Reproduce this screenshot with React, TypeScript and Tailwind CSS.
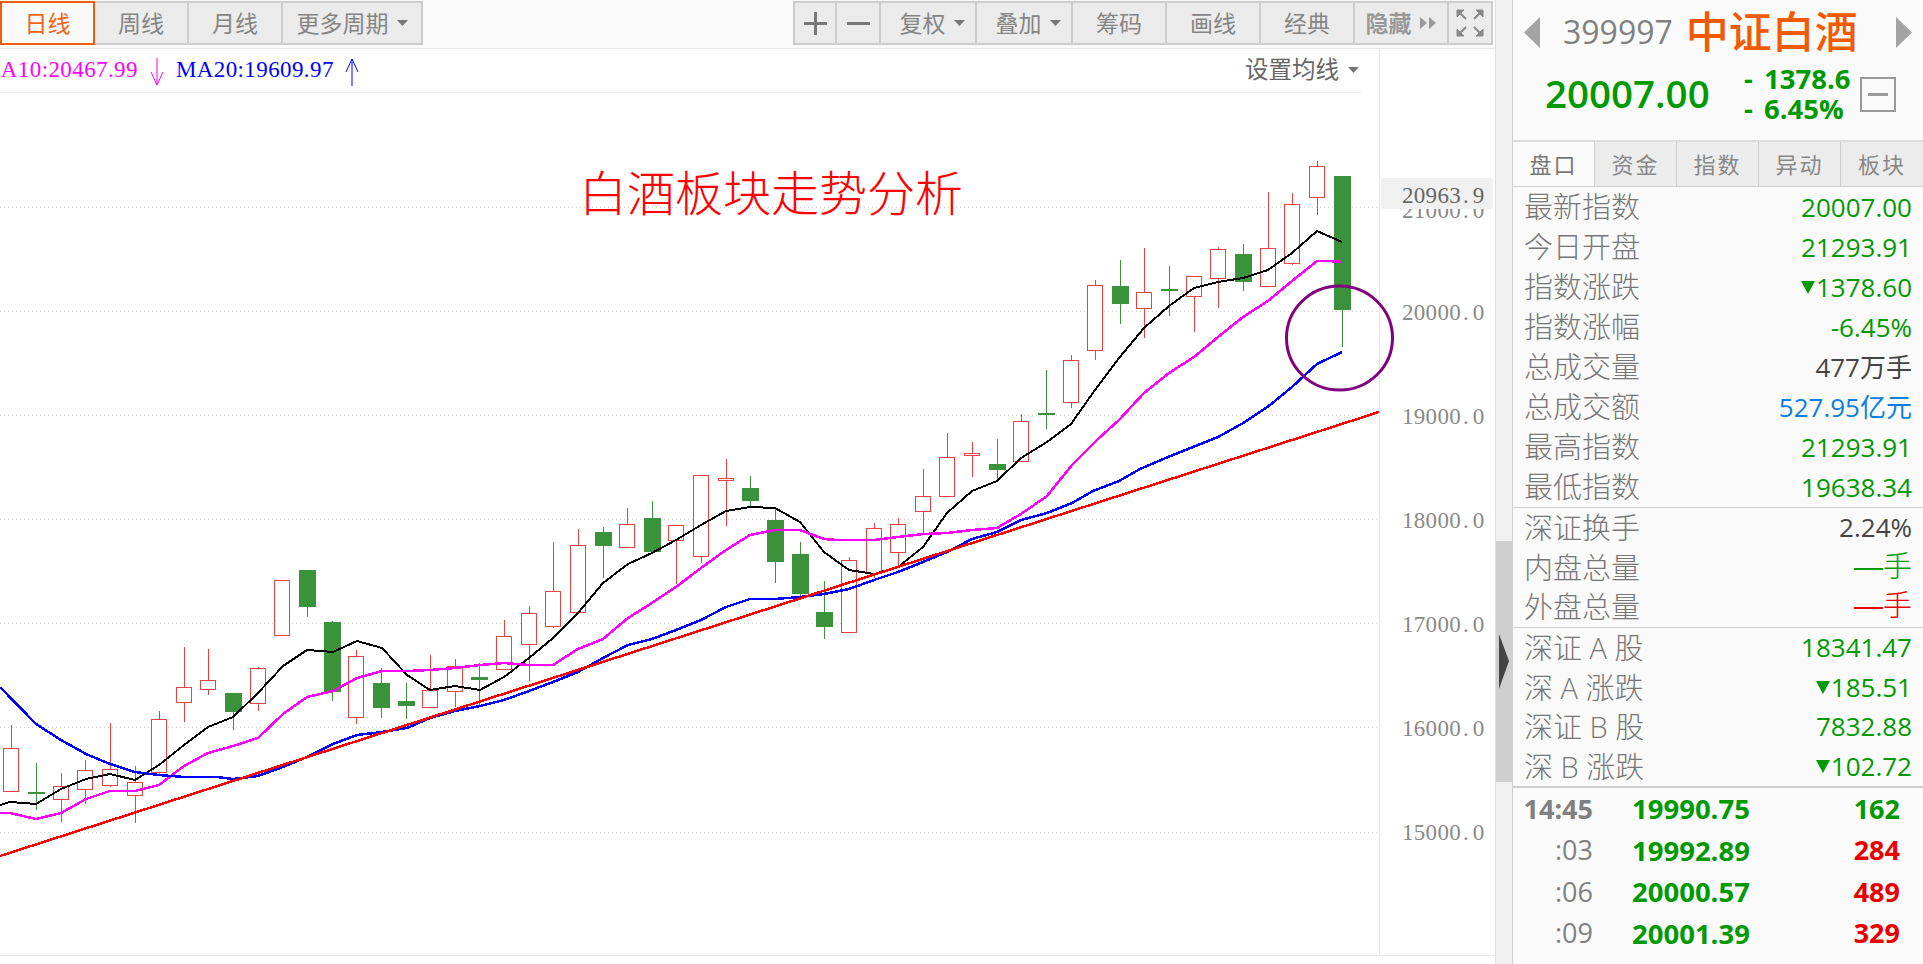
import React from 'react';

type Candle = [number, number, number, number, number, 'r' | 'g'];

// x, body top, body bottom, wick top, wick bottom
const CANDLES: Candle[] = [
  [11, 748, 791, 725, 748, 'r'],
  [36, 792, 794, 763, 810, 'g'],
  [61, 786, 799, 773, 822, 'r'],
  [85, 770, 789, 760, 804, 'r'],
  [110, 769, 785, 723, 787, 'r'],
  [135, 782, 795, 766, 823, 'r'],
  [159, 719, 772, 711, 774, 'r'],
  [184, 687, 702, 647, 722, 'r'],
  [208, 680, 689, 649, 695, 'r'],
  [233, 693, 712, 693, 730, 'g'],
  [258, 668, 703, 667, 711, 'r'],
  [282, 580, 635, 580, 635, 'r'],
  [307, 570, 607, 570, 617, 'g'],
  [332, 622, 692, 621, 701, 'g'],
  [356, 656, 717, 650, 724, 'r'],
  [381, 683, 708, 668, 718, 'g'],
  [406, 701, 706, 683, 719, 'g'],
  [430, 690, 707, 655, 707, 'r'],
  [455, 666, 691, 659, 707, 'r'],
  [479, 677, 680, 663, 707, 'g'],
  [504, 636, 669, 620, 669, 'r'],
  [529, 613, 644, 606, 681, 'r'],
  [553, 591, 626, 542, 628, 'r'],
  [578, 545, 612, 529, 612, 'r'],
  [603, 532, 546, 527, 578, 'g'],
  [627, 524, 547, 508, 547, 'r'],
  [652, 518, 552, 501, 552, 'g'],
  [676, 525, 540, 525, 584, 'r'],
  [701, 475, 556, 475, 563, 'r'],
  [726, 478, 480, 459, 526, 'r'],
  [750, 488, 501, 476, 507, 'g'],
  [775, 520, 562, 507, 583, 'g'],
  [800, 554, 594, 542, 597, 'g'],
  [824, 612, 627, 581, 639, 'g'],
  [849, 560, 632, 557, 632, 'r'],
  [874, 528, 573, 523, 578, 'r'],
  [898, 524, 552, 518, 568, 'r'],
  [923, 496, 511, 469, 535, 'r'],
  [947, 457, 496, 433, 496, 'r'],
  [972, 453, 455, 442, 477, 'r'],
  [997, 464, 470, 439, 480, 'g'],
  [1021, 421, 461, 414, 461, 'r'],
  [1046, 413, 415, 370, 429, 'g'],
  [1071, 360, 402, 355, 408, 'r'],
  [1095, 285, 350, 280, 360, 'r'],
  [1120, 286, 304, 260, 324, 'g'],
  [1144, 292, 308, 248, 338, 'r'],
  [1169, 289, 290, 266, 316, 'g'],
  [1194, 276, 296, 276, 332, 'r'],
  [1218, 249, 278, 247, 308, 'r'],
  [1243, 254, 282, 244, 291, 'g'],
  [1268, 248, 286, 192, 286, 'r'],
  [1292, 204, 263, 193, 265, 'r'],
  [1317, 166, 197, 161, 215, 'r'],
  [1342, 176, 310, 176, 347, 'g'],
];

const MA5 =
  '0,805 10,802 36,804 61,789 86,779 110,774 135,780 159,765 184,745 208,727 233,717 258,693 283,666 307,650 333,652 357,641 382,648 407,675 430,690 455,686 480,690 504,677 529,658 553,638 578,613 603,583 628,564 652,553 676,540 701,525 726,511 750,507 775,508 800,522 824,552 849,570 874,574 898,567 923,547 947,513 972,491 997,481 1021,458 1047,442 1071,424 1095,390 1119,358 1144,328 1169,306 1194,288 1218,282 1243,278 1268,270 1292,253 1317,231 1342,242';
const MA10 =
  '0,813 10,813 36,819 61,813 86,799 110,791 135,791 159,785 184,766 208,753 233,746 258,738 283,714 307,697 333,691 357,678 382,671 407,671 430,670 455,668 480,665 504,663 529,665 553,665 578,649 603,639 628,618 652,603 676,587 701,568 726,550 750,535 775,530 800,530 824,539 837,540 874,540 898,537 923,534 947,533 972,530 997,528 1021,514 1047,496 1072,465 1097,440 1119,420 1144,393 1169,373 1194,357 1218,337 1243,317 1268,301 1292,281 1317,261 1329,261 1342,262';
const MA20 =
  '0,687 36,724 61,740 86,754 110,764 135,772 159,775 184,777 217,777 233,779 258,776 283,767 307,757 333,744 357,735 382,732 407,728 430,718 455,711 480,706 504,700 529,691 553,682 578,672 603,658 628,645 652,639 676,630 701,620 726,607 750,599 775,599 800,597 824,594 849,589 874,580 898,572 923,562 947,552 972,539 997,532 1021,520 1047,513 1072,503 1093,491 1119,481 1140,469 1168,457 1218,437 1245,422 1270,405 1292,387 1317,364 1342,352';

const GRID = [207, 311, 415, 519, 623, 727, 832];
const AXIS: [string, number][] = [
  ['21000.0', 210],
  ['20000.0', 312],
  ['19000.0', 416],
  ['18000.0', 520],
  ['17000.0', 624],
  ['16000.0', 728],
  ['15000.0', 832],
];
// fixed pitch for the axis digits, the period takes a full cell too
const AXIS_X = '1402 1413.8 1425.6 1437.4 1449.2 1463 1472.8';

const GREEN = 'text-[#009900]';
const RED = 'text-[#e60000]';

const Caret = ({ className = '' }: { className?: string }) => (
  <svg width="11" height="6" viewBox="0 0 11 6" className={className}>
    <polygon points="0,0 11,0 5.5,6" fill="#777" />
  </svg>
);

const ToolBtn = ({ className = '', children }: { className?: string; children: React.ReactNode }) => (
  <button className={`h-[44px] -ml-[2px] flex items-center justify-center gap-[8px] border-2 border-[#cdcdcd] bg-[#ebebeb] text-[23px] text-[#858585] ${className}`}>
    {children}
  </button>
);

const DownMark = () => (
  <svg width="14" height="13" viewBox="0 0 14 13" className="mr-[1px]">
    <polygon points="0,0 14,0 7,13" fill="#009900" />
  </svg>
);

const Row = ({ label, className = '', children }: { label: string; className?: string; children: React.ReactNode }) => (
  <div className="flex-1 min-h-0 pl-[11px] pr-[11px] flex items-center justify-between">
    <span className="text-[29px] font-light text-[#777] whitespace-pre">{label}</span>
    <span className={`flex items-center text-[26px] ${className}`}>{children}</span>
  </div>
);

const TICKS: [string, string, string, string][] = [
  ['14:45', '19990.75', '162', GREEN],
  [':03', '19992.89', '284', RED],
  [':06', '20000.57', '489', RED],
  [':09', '20001.39', '329', RED],
  [':12', '20003.75', '112', RED],
];

function Chart() {
  return (
    <svg width="1379" height="862" viewBox="0 93 1379 862" className="relative z-10 block overflow-visible">
      {GRID.map((y) => (
        <line key={y} x1="0" x2="1379" y1={y + 0.5} y2={y + 0.5} stroke="#cfcfcf" strokeDasharray="1 3" />
      ))}
      <g shapeRendering="crispEdges">
        {CANDLES.map(([x, top, bottom, hi, lo, kind]) => {
          const color = kind === 'r' ? '#e84343' : '#3a923a';
          return (
            <g key={x}>
              <line x1={x + 0.5} x2={x + 0.5} y1={hi} y2={lo} stroke={color} />
              {kind === 'r' ? (
                <rect x={x - 7.5} y={top + 0.5} width="15" height={Math.max(bottom - top, 1)} fill="#fff" stroke={color} />
              ) : (
                <rect x={x - 8} y={top} width="17" height={Math.max(bottom - top, 2)} fill={color} />
              )}
            </g>
          );
        })}
        <polyline points={MA5} fill="none" stroke="#000" strokeWidth="2" />
        <polyline points={MA10} fill="none" stroke="#ff00ff" strokeWidth="2.5" />
        <polyline points={MA20} fill="none" stroke="#0000ff" strokeWidth="2.5" />
        <line x1="0" y1="856" x2="1379" y2="412" stroke="#ff0000" strokeWidth="2.5" />
      </g>
      <ellipse cx="1339.5" cy="338" rx="53" ry="52" fill="none" stroke="#800080" strokeWidth="3" />
    </svg>
  );
}

function Axis() {
  return (
    <svg width="115" height="862" viewBox="1380 93 115 862" className="block">
      <g fontFamily="'Liberation Serif', serif" fontSize="23" fill="#888">
        {AXIS.map(([label, y]) => (
          <text key={label} x={AXIS_X} y={y + 8}>
            {label}
          </text>
        ))}
      </g>
      <rect x="1381" y="178" width="112" height="31" rx="2" fill="#f0f0f0" />
      <text x={AXIS_X} y="203" fontFamily="'Liberation Serif', serif" fontSize="23" fill="#666">
        20963.9
      </text>
    </svg>
  );
}

export default function App() {
  return (
    <div className="w-[1923px] h-[964px] flex overflow-hidden bg-white font-['Open_Sans','Noto_Sans_CJK_SC',sans-serif]">
      <main className="w-[1496px] flex flex-col border-r border-[#dedede]">
        <div className="h-[49px] pt-[1px] pl-[2px] pr-[2px] flex bg-[#fafafa] border-b border-[#e6e6e6]">
          <ToolBtn className="w-[95px] relative z-10 !border-[#ee6010] !bg-[#fafafa] !text-[#f0651a]">日线</ToolBtn>
          <ToolBtn className="w-[96px]">周线</ToolBtn>
          <ToolBtn className="w-[96px]">月线</ToolBtn>
          <ToolBtn className="w-[142px]">
            更多周期
            <Caret />
          </ToolBtn>
          <div className="ml-auto flex">
            <ToolBtn className="w-[44px]">
              <svg width="23" height="23" viewBox="0 0 23 23">
                <path d="M0 11.5H23M11.5 0V23" stroke="#777" strokeWidth="3" />
              </svg>
            </ToolBtn>
            <ToolBtn className="w-[46px]">
              <svg width="23" height="3" viewBox="0 0 23 3">
                <path d="M0 1.5H23" stroke="#777" strokeWidth="3" />
              </svg>
            </ToolBtn>
            <ToolBtn className="w-[98px] pl-[8px]">
              复权
              <Caret />
            </ToolBtn>
            <ToolBtn className="w-[98px] pl-[8px]">
              叠加
              <Caret />
            </ToolBtn>
            <ToolBtn className="w-[96px]">筹码</ToolBtn>
            <ToolBtn className="w-[96px]">画线</ToolBtn>
            <ToolBtn className="w-[96px]">经典</ToolBtn>
            <ToolBtn className="w-[96px] !gap-[7px] font-bold !text-[#999]">
              隐藏
              <svg width="18" height="14" viewBox="0 0 18 14">
                <path d="M1 1L8 7L1 13ZM10 1L17 7L10 13Z" fill="#999" />
              </svg>
            </ToolBtn>
            <ToolBtn className="w-[46px]">
              <svg width="28" height="28" viewBox="0 0 28 28" fill="#888" stroke="#888">
                <path d="M1 1H8L1 8ZM27 1H20L27 8ZM1 27H8L1 20ZM27 27H20L27 20Z" />
                <path d="M3 3L10 10M25 3L18 10M3 25L10 18M25 25L18 18" strokeWidth="2" fill="none" />
              </svg>
            </ToolBtn>
          </div>
        </div>

        <div className="flex-1 flex min-h-0">
          <div className="relative w-[1380px] border-r border-[#e4e4e4]">
            <div className="w-[1361px] h-[44px] pr-[2px] flex items-center border-b border-[#eaeaea] font-['Liberation_Serif',serif] text-[23px] tracking-[0.4px] overflow-hidden">
              <span className="-ml-[20px] text-[#ff00ff]">MA10:20467.99</span>
              <svg width="14" height="28" viewBox="0 0 14 28" className="ml-[12px] mt-[3px]">
                <path d="M7 0V27M1 14L7 27L13 14" fill="none" stroke="#ff00ff" />
              </svg>
              <span className="ml-[12px] text-[#0000ff]">MA20:19609.97</span>
              <svg width="14" height="28" viewBox="0 0 14 28" className="ml-[11px] mt-[3px]">
                <path d="M7 28V1M1 14L7 1L13 14" fill="none" stroke="#0000ff" />
              </svg>
              <span className="ml-auto -mt-[4px] flex items-center gap-[9px] font-['Noto_Sans_CJK_SC',sans-serif] text-[23.5px] tracking-normal text-[#666]">
                设置均线
                <Caret className="mt-[2px]" />
              </span>
            </div>
            <Chart />
            <div className="absolute z-20 left-[579px] top-[114px] text-[48px] leading-[60px] font-light text-[#ff0000] whitespace-nowrap">
              白酒板块走势分析
            </div>
          </div>
          <div className="pt-[44px]">
            <Axis />
          </div>
        </div>
        <div className="h-[9px] border-t border-[#e4e4e4]" />
      </main>

      <div className="w-[16px] flex flex-col bg-[#f0f0f0]">
        <div className="h-[541px]" />
        <div className="h-[241px] bg-[#cfcfcf] flex items-center pl-[3px]">
          <svg width="10" height="55" viewBox="0 0 10 55">
            <polygon points="0,0 10,27 0,55" fill="#444" />
          </svg>
        </div>
      </div>

      <aside className="w-[411px] h-[964px] overflow-hidden bg-[#fafafa] border-l border-[#cfcfcf]">
        <div className="h-[142px] border-b-[2px] border-[#dcdcdc]">
          <div className="h-[64px] flex items-center pl-[11px] pr-[11px]">
            <svg width="16" height="31" viewBox="0 0 16 31">
              <polygon points="16,0 16,31 0,15.5" fill="#a3a3a3" />
            </svg>
            <span className="ml-[23px] text-[32px] text-[#808080]">399997</span>
            <span className="ml-[13px] text-[43px] leading-[50px] font-medium text-[#f05a00]">中证白酒</span>
            <svg width="16" height="31" viewBox="0 0 16 31" className="ml-auto">
              <polygon points="0,0 0,31 16,15.5" fill="#a3a3a3" />
            </svg>
          </div>
          <div className="h-[60px] flex items-center pl-[32px]">
            <span className="w-[199px] text-[38.5px] font-semibold text-[#009900]">20007.00</span>
            <div className="w-[116px] text-[27.5px] leading-[30px] font-bold text-[#009900]">
              <div className="flex">
                <span className="w-[20px]">-</span>1378.6
              </div>
              <div className="flex">
                <span className="w-[20px]">-</span>6.45%
              </div>
            </div>
            <div className="w-[36px] h-[35px] border-2 border-[#999] flex items-center justify-center">
              <div className="w-[20px] h-[3px] bg-[#999]" />
            </div>
          </div>
        </div>

        <div className="h-[45px] grid grid-cols-5 border-b border-[#cfcfcf] text-[22px] tracking-[2px] text-[#888]">
          <div className="flex items-center justify-center border-r border-[#cfcfcf] text-[#777]">盘口</div>
          <div className="flex items-center justify-center border-r border-[#cfcfcf] bg-[#ececec]">资金</div>
          <div className="flex items-center justify-center border-r border-[#cfcfcf] bg-[#ececec]">指数</div>
          <div className="flex items-center justify-center border-r border-[#cfcfcf] bg-[#ececec]">异动</div>
          <div className="flex items-center justify-center bg-[#ececec]">板块</div>
        </div>

        <div className="h-[321px] flex flex-col border-b border-[#cfcfcf]">
          <Row label="最新指数" className={GREEN}>20007.00</Row>
          <Row label="今日开盘" className={GREEN}>21293.91</Row>
          <Row label="指数涨跌" className={GREEN}>
            <DownMark />
            1378.60
          </Row>
          <Row label="指数涨幅" className={GREEN}>-6.45%</Row>
          <Row label="总成交量" className="text-[#444]">477万手</Row>
          <Row label="总成交额" className="text-[#0a7fe0]">527.95亿元</Row>
          <Row label="最高指数" className={GREEN}>21293.91</Row>
          <Row label="最低指数" className={GREEN}>19638.34</Row>
        </div>
        <div className="h-[120px] flex flex-col border-b border-[#cfcfcf]">
          <Row label="深证换手" className="text-[#444]">2.24%</Row>
          <Row label="内盘总量" className={GREEN}>
            <span className="font-['Liberation_Sans','Noto_Sans_CJK_SC',sans-serif] text-[29px] font-light">—手</span>
          </Row>
          <Row label="外盘总量" className={RED}>
            <span className="font-['Liberation_Sans','Noto_Sans_CJK_SC',sans-serif] text-[29px] font-light">—手</span>
          </Row>
        </div>
        <div className="h-[160px] flex flex-col border-b-[2px] border-[#cfcfcf]">
          <Row label="深证 A 股" className={GREEN}>18341.47</Row>
          <Row label="深 A 涨跌" className={GREEN}>
            <DownMark />
            185.51
          </Row>
          <Row label="深证 B 股" className={GREEN}>7832.88</Row>
          <Row label="深 B 涨跌" className={GREEN}>
            <DownMark />
            102.72
          </Row>
        </div>

        {TICKS.map(([time, price, vol, color], i) => (
          <div key={time} className="h-[41.5px] flex items-center text-[27px]">
            <span className={`w-[80px] text-right text-[#808080] ${i === 0 ? 'font-bold' : ''}`}>{time}</span>
            <span className="ml-[39px] text-[27.5px] font-bold text-[#009900]">{price}</span>
            <span className={`ml-auto mr-[23px] font-bold ${color}`}>{vol}</span>
          </div>
        ))}
      </aside>
    </div>
  );
}
